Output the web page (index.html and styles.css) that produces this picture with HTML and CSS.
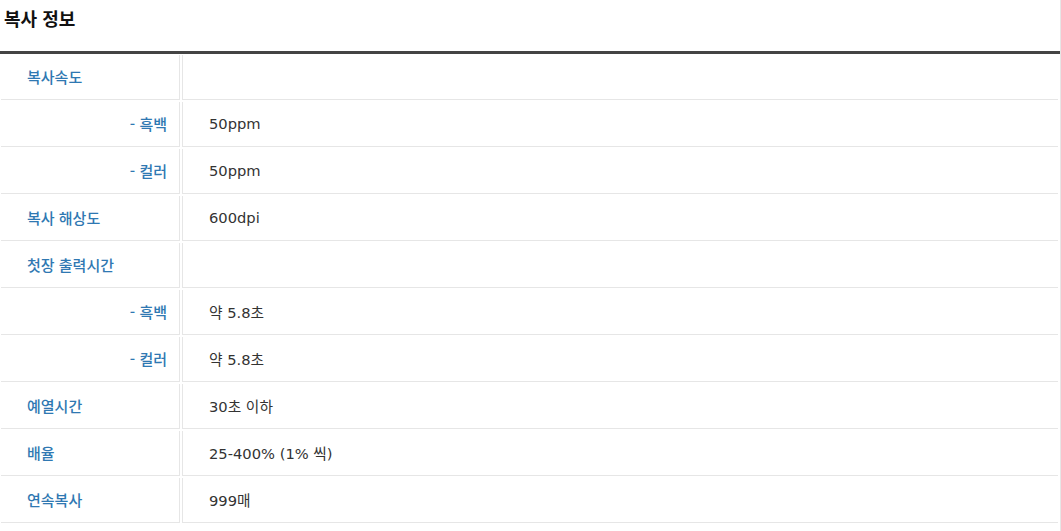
FILE: index.html
```html
<!DOCTYPE html>
<html lang="ko">
<head>
<meta charset="utf-8">
<link rel="stylesheet" href="styles.css">
</head>
<body>
<div class="panel">
  <h2 class="title">복사 정보</h2>
  <table class="spec">
    <tr><th>복사속도</th><td></td></tr>
    <tr><th class="sub">- 흑백</th><td>50ppm</td></tr>
    <tr><th class="sub">- 컬러</th><td>50ppm</td></tr>
    <tr><th>복사 해상도</th><td>600dpi</td></tr>
    <tr><th>첫장 출력시간</th><td></td></tr>
    <tr><th class="sub">- 흑백</th><td>약 5.8초</td></tr>
    <tr><th class="sub">- 컬러</th><td>약 5.8초</td></tr>
    <tr><th>예열시간</th><td>30초 이하</td></tr>
    <tr><th>배율</th><td>25-400% (1% 씩)</td></tr>
    <tr><th>연속복사</th><td>999매</td></tr>
  </table>
</div>
</body>
</html>
```

FILE: styles.css
```css
html, body {
  margin: 0;
  padding: 0;
  background: #fff;
}
body {
  font-family: "DejaVu Sans", "Noto Sans CJK KR", sans-serif;
}
.panel {
  width: 1061px;
  border-right: 1px solid #e6e6e6;
  min-height: 531px;
  box-sizing: border-box;
}
.title {
  margin: 0;
  height: 54px;
  box-sizing: border-box;
  padding: 5px 0 0 4px;
  font-family: "Noto Sans CJK KR", sans-serif;
  font-size: 18px;
  font-weight: 700;
  color: #111;
  line-height: 26px;
  border-bottom: 3px solid #444;
}
.spec {
  width: 1061px;
  margin: -1px 0 0 -1px;
  border-collapse: separate;
  border-spacing: 2px;
  font-size: 14.7px;
}
.spec th, .spec td {
  height: 45px;
  box-sizing: border-box;
  border-bottom: 1px solid #e6e6e6;
  padding: 0 0 2px 0;
  vertical-align: middle;
}
.spec th {
  width: 179px;
  border-right: 1px solid #e6e6e6;
  text-align: left;
  padding-left: 26px;
  font-family: "Noto Sans CJK KR", sans-serif;
  font-size: 15px;
  font-weight: 500;
  color: #2f78b2;
}
.spec th.sub {
  text-align: right;
  padding-left: 0;
  padding-right: 12px;
}
.spec td {
  border-left: 1px solid #e6e6e6;
  padding-left: 26px;
  color: #333;
}
```
